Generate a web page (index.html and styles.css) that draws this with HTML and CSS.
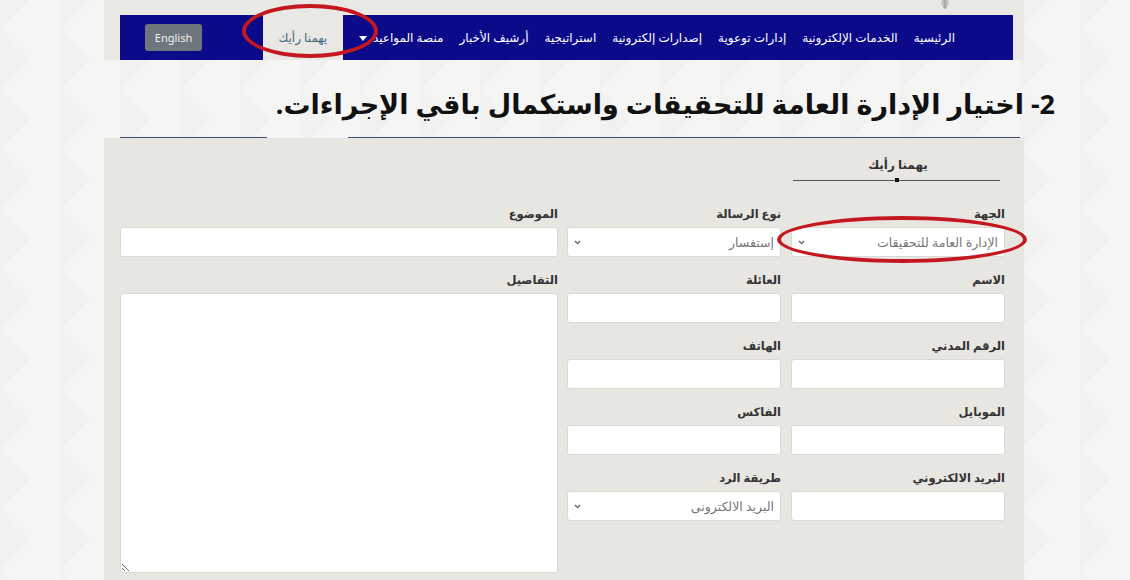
FILE: index.html
```html
<!DOCTYPE html>
<html lang="ar" dir="rtl">
<head>
    <meta charset="UTF-8">
    <meta name="viewport" content="width=device-width, initial-scale=1.0">
    <title>يهمنا رأيك</title>
    <link rel="stylesheet" href="styles.css">
</head>
<body>
    <div class="top-panel">
        <div class="crest-row">
            <svg class="crest" width="10" height="9" viewBox="0 0 10 9">
                <path d="M5 0 L5 9 M2 1 L8 1 M1 3 L9 3 M2 5 L8 5 M3 7 L7 7" stroke="#9a9a9a" stroke-width="1.2" fill="none"/>
            </svg>
        </div>
        <nav class="navbar">
            <ul>
                <li><a href="#">الرئيسية</a></li>
                <li><a href="#">الخدمات الإلكترونية</a></li>
                <li><a href="#">إدارات توعوية</a></li>
                <li><a href="#">إصدارات إلكترونية</a></li>
                <li><a href="#">استراتيجية</a></li>
                <li><a href="#">أرشيف الأخبار</a></li>
                <li class="dropdown"><a href="#">منصة المواعيد <span class="caret"></span></a></li>
                <li class="active"><a href="#">يهمنا رأيك</a></li>
                <li class="lang"><a href="#">English</a></li>
            </ul>
        </nav>
    </div>

    <h1 class="step-title">2- اختيار الإدارة العامة للتحقيقات واستكمال باقي الإجراءات.</h1>

    <div class="rule">
        <span class="rule-long"></span>
        <span class="rule-short"></span>
    </div>

    <section class="form-panel">
        <div class="form-head">
            <h2>يهمنا رأيك</h2>
            <div class="head-line"><span class="dot"></span></div>
        </div>

        <div class="form-body">
            <div class="fields">
                <div class="field">
                    <label>الجهة</label>
                    <div class="select">
                        <select><option>الإدارة العامة للتحقيقات</option></select>
                        <svg class="chevron" width="7" height="5" viewBox="0 0 7 5"><path d="M1 1 L3.5 3.5 L6 1" stroke="#666" stroke-width="1.4" fill="none"/></svg>
                    </div>
                </div>
                <div class="field">
                    <label>نوع الرسالة</label>
                    <div class="select">
                        <select><option>إستفسار</option></select>
                        <svg class="chevron" width="7" height="5" viewBox="0 0 7 5"><path d="M1 1 L3.5 3.5 L6 1" stroke="#666" stroke-width="1.4" fill="none"/></svg>
                    </div>
                </div>
                <div class="field">
                    <label>الاسم</label>
                    <input type="text">
                </div>
                <div class="field">
                    <label>العائلة</label>
                    <input type="text">
                </div>
                <div class="field">
                    <label>الرقم المدني</label>
                    <input type="text">
                </div>
                <div class="field">
                    <label>الهاتف</label>
                    <input type="text">
                </div>
                <div class="field">
                    <label>الموبايل</label>
                    <input type="text">
                </div>
                <div class="field">
                    <label>الفاكس</label>
                    <input type="text">
                </div>
                <div class="field">
                    <label>البريد الالكتروني</label>
                    <input type="text">
                </div>
                <div class="field">
                    <label>طريقة الرد</label>
                    <div class="select">
                        <select><option>البريد الالكترونى</option></select>
                        <svg class="chevron" width="7" height="5" viewBox="0 0 7 5"><path d="M1 1 L3.5 3.5 L6 1" stroke="#666" stroke-width="1.4" fill="none"/></svg>
                    </div>
                </div>
            </div>

            <div class="side">
                <div class="field">
                    <label>الموضوع</label>
                    <input type="text">
                </div>
                <div class="field">
                    <label>التفاصيل</label>
                    <textarea></textarea>
                </div>
            </div>
        </div>
    </section>

    <!-- red annotation rings -->
    <span class="ring ring-nav"></span>
    <span class="ring ring-select"></span>
</body>
</html>
```

FILE: styles.css
```css
/* Base */
html, body {
    margin: 0;
    padding: 0;
    font-family: "Noto Sans", "DejaVu Sans", sans-serif;
    color: #333;
    background-color: #f5f5f3;
}

body {
    position: relative;
    width: 1130px;
    height: 580px;
    overflow: hidden;
    background-image:
        linear-gradient(135deg, rgba(0, 0, 0, 0.015) 25%, transparent 25%),
        linear-gradient(45deg, rgba(0, 0, 0, 0.012) 25%, transparent 25%);
    background-size: 60px 60px;
}

/* Top strip with the navbar */
.top-panel {
    width: 920px;
    margin: 0 auto 0 104px;
    background-color: #e9e8e4;
}

.crest-row {
    height: 15px;
    padding-right: 74px;
    display: flex;
}

.navbar {
    height: 45px;
    margin: 0 11px 0 16px;
    background-color: #0b0b8a;
}

.navbar ul {
    list-style: none;
    margin: 0;
    padding: 0 50px 0 25px;
    height: 100%;
    display: flex;
    align-items: center;
}

.navbar li {
    height: 100%;
    display: flex;
    align-items: center;
}

.navbar a {
    color: #fff;
    text-decoration: none;
    font-size: 12px;
    padding: 0 8px;
    white-space: nowrap;
}

.navbar .caret {
    display: inline-block;
    width: 0;
    height: 0;
    margin-right: 3px;
    vertical-align: middle;
    border-top: 5px solid #fff;
    border-left: 4px solid transparent;
    border-right: 4px solid transparent;
}

.navbar .active {
    background-color: #e9e8e4;
    width: 80px;
    justify-content: center;
    margin-right: 8px;
}

.navbar .active a {
    color: #3f6a7d;
    padding: 0;
}

.navbar .lang {
    margin-right: auto;
}

.navbar .lang a {
    display: block;
    width: 57px;
    height: 27px;
    line-height: 27px;
    padding: 0;
    text-align: center;
    font-size: 11px;
    border-radius: 3px;
    background-color: #6e757c;
    color: #f2f2f2;
}

/* Step title */
.step-title {
    margin: 0;
    height: 77px;
    box-sizing: border-box;
    padding: 24px 75px 0 0;
    line-height: 40px;
    font-size: 27px;
    font-weight: bold;
    color: #111;
}

.rule {
    display: flex;
    height: 1px;
}

.rule span {
    height: 1px;
    background-color: #454b6e;
}

.rule-long {
    width: 672px;
    margin-right: 110px;
}

.rule-short {
    width: 147px;
    margin-right: 81px;
}

/* Form panel */
.form-panel {
    width: 920px;
    height: 442px;
    margin: 0 auto 0 104px;
    box-sizing: border-box;
    padding: 0 19px 0 16px;
    background-color: #e8e6e1;
}

.form-head {
    width: 214px;
    padding-top: 17px;
}

.form-head h2 {
    margin: 0;
    font-size: 12px;
    line-height: 20px;
    font-weight: bold;
    color: #333;
    text-align: center;
}

.head-line {
    position: relative;
    width: 207px;
    height: 1px;
    margin: 5px 5px 0 0;
    background-color: #555;
}

.head-line .dot {
    position: absolute;
    right: 101px;
    top: -2px;
    width: 4px;
    height: 4px;
    background-color: #111;
}

.form-body {
    display: flex;
    align-items: flex-start;
    gap: 9px;
    margin-top: 23px;
}

.fields {
    display: grid;
    grid-template-columns: 214px 214px;
    grid-auto-rows: 66px;
    column-gap: 10px;
}

.side {
    flex: 1;
}

.field {
    height: 66px;
}

.field label {
    display: block;
    height: 20px;
    font-size: 11.5px;
    font-weight: bold;
    line-height: 20px;
    margin-bottom: 3px;
    color: #333;
    overflow: visible;
}

.field input,
.field select,
.field textarea {
    display: block;
    width: 100%;
    height: 30px;
    margin: 0;
    box-sizing: border-box;
    border: 1px solid #dcdad5;
    border-radius: 3px;
    background-color: #fff;
    font-family: "Noto Sans", "DejaVu Sans", sans-serif;
}

.side .field:last-child {
    height: auto;
}

.field textarea {
    height: 280px;
    resize: vertical;
}

.select {
    position: relative;
    height: 30px;
}

.select select {
    appearance: none;
    -webkit-appearance: none;
    padding: 0 6px 0 20px;
    font-size: 12.5px;
    color: #777;
}

.select .chevron {
    position: absolute;
    left: 7px;
    top: 13px;
}

/* Red annotation rings */
.ring {
    position: absolute;
    border: 4px solid #c4171f;
    border-radius: 50%;
    box-sizing: border-box;
}

.ring-nav {
    left: 242px;
    top: 4px;
    width: 136px;
    height: 54px;
}

.ring-select {
    left: 777px;
    top: 216px;
    width: 250px;
    height: 47px;
}
```
